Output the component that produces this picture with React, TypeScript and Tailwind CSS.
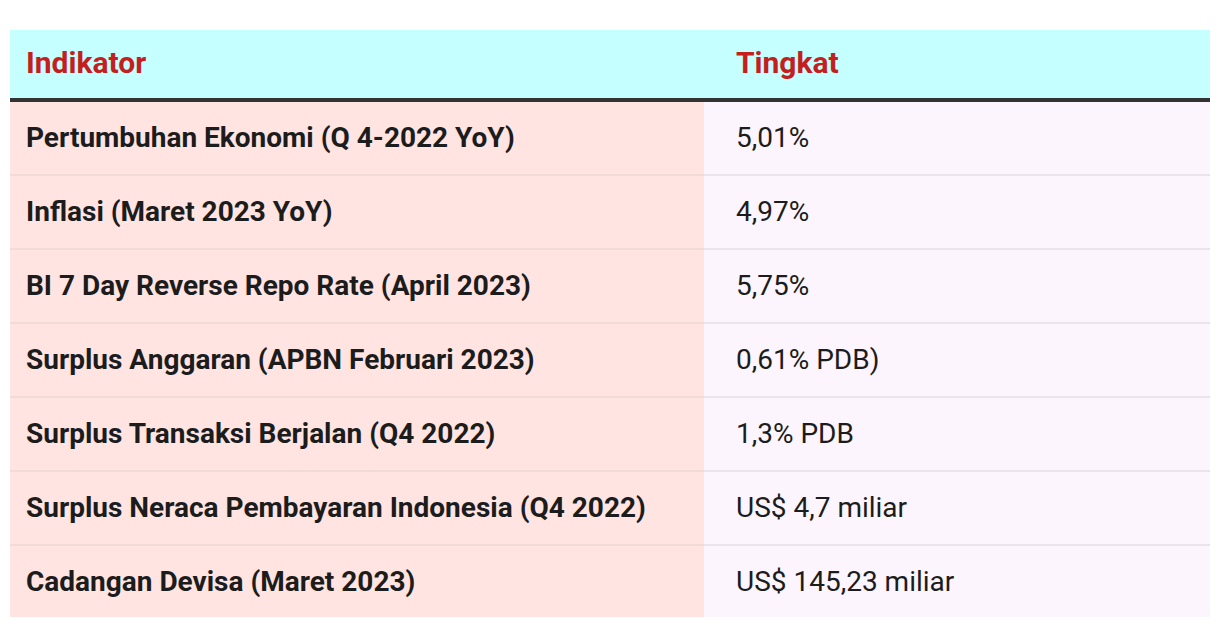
const rows = [
  ["Pertumbuhan Ekonomi (Q 4-2022 YoY)", "5,01%"],
  ["Inflasi (Maret 2023 YoY)", "4,97%"],
  ["BI 7 Day Reverse Repo Rate (April 2023)", "5,75%"],
  ["Surplus Anggaran (APBN Februari 2023)", "0,61% PDB)"],
  ["Surplus Transaksi Berjalan (Q4 2022)", "1,3% PDB"],
  ["Surplus Neraca Pembayaran Indonesia (Q4 2022)", "US$ 4,7 miliar"],
  ["Cadangan Devisa (Maret 2023)", "US$ 145,23 miliar"],
];

export default function App() {
  return (
    <div className="min-h-screen bg-white px-[10px] pt-[30px] font-['Roboto',sans-serif] text-[#1c1c1c]">
      <div className="grid h-[72px] grid-cols-[694px_1fr] items-center border-b-4 border-[#333333] bg-[#c6ffff] pb-[3px] text-[30px] font-bold text-[#c41e1e]">
        <div className="pl-4">Indikator</div>
        <div className="pl-8">Tingkat</div>
      </div>
      {rows.map(([label, value], i) => {
        const last = i === rows.length - 1;
        return (
          <div
            key={label}
            className={last ? "grid h-[71px] grid-cols-[694px_1fr]" : "grid h-[74px] grid-cols-[694px_1fr]"}
          >
            <div
              className={
                last
                  ? "flex items-center bg-[#ffe4e1] pl-4 text-[28px] font-bold"
                  : "flex items-center border-b-2 border-[#f1dbd8] bg-[#ffe4e1] pl-4 text-[28px] font-bold"
              }
            >
              {label}
            </div>
            <div
              className={
                last
                  ? "flex items-center bg-[#fdf5fd] pl-8 text-[28px]"
                  : "flex items-center border-b-2 border-[#ece4ec] bg-[#fdf5fd] pl-8 text-[28px]"
              }
            >
              {value}
            </div>
          </div>
        );
      })}
    </div>
  );
}
